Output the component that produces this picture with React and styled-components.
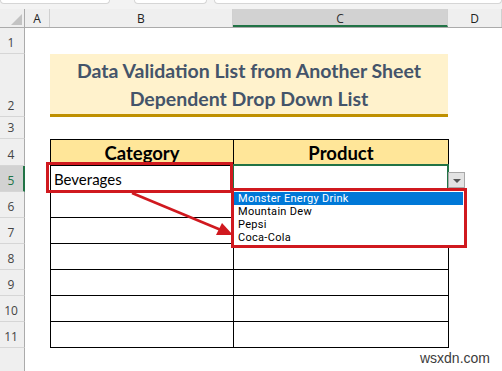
import React from "react";
import styled, { createGlobalStyle } from "styled-components";

const Global = createGlobalStyle`
  html, body { margin: 0; padding: 0; background: #ffffff; }
  body { font-family: "Liberation Sans", Arial, sans-serif; }
`;

const GREEN = "#217346";
const RED = "#d0191f";

const Sheet = styled.div`
  position: relative;
  width: 502px;
  height: 371px;
  overflow: hidden;
  background: #ffffff;
  display: flex;
  flex-direction: column;
`;

const TopStrip = styled.div`
  height: 9px;
  flex: none;
  background: #f3f3f3;
  display: flex;
  align-items: flex-start;
`;

const StripBox = styled.div`
  height: 3px;
  width: ${(p) => p.$w}px;
  margin-left: ${(p) => p.$ml || 0}px;
  background: #ffffff;
  border: 1px solid #d6d6d6;
  border-top: none;
  border-radius: 0 0 4px 4px;
  ${(p) => (p.$grow ? "flex: 1;" : "")}
`;

const HeaderRow = styled.div`
  height: 19px;
  flex: none;
  display: flex;
  background: #efefef;
  border-bottom: 1px solid #ababab;
  box-sizing: border-box;
`;

const Corner = styled.div`
  width: 25px;
  flex: none;
  position: relative;
  border-right: 1px solid #ababab;
  box-sizing: border-box;
  &::after {
    content: "";
    position: absolute;
    right: 2px;
    bottom: 2px;
    width: 0;
    height: 0;
    border-left: 11px solid transparent;
    border-bottom: 11px solid #c3c3c3;
  }
`;

const ColHead = styled.div`
  width: ${(p) => (p.$w ? `${p.$w}px` : "auto")};
  flex: ${(p) => (p.$w ? "none" : "1")};
  box-sizing: border-box;
  display: flex;
  align-items: center;
  justify-content: center;
  font-family: "Open Sans", "Liberation Sans", sans-serif;
  font-size: 12px;
  color: ${(p) => (p.$sel ? "#2f2f2f" : "#222")};
  background: ${(p) => (p.$sel ? "#d2d2d2" : "transparent")};
  border-right: 1px solid #d0d0d0;
  border-bottom: ${(p) => (p.$sel ? `2px solid ${GREEN}` : "none")};
  padding-top: ${(p) => (p.$sel ? "2px" : "0")};
`;

const Row = styled.div`
  height: ${(p) => p.$h}px;
  flex: none;
  display: flex;
`;

const RowHead = styled.div`
  width: 25px;
  flex: none;
  box-sizing: border-box;
  display: flex;
  align-items: flex-end;
  justify-content: center;
  padding-bottom: 2px;
  padding-right: ${(p) => (p.$sel ? "1px" : "2px")};
  font-family: "Open Sans", "Liberation Sans", sans-serif;
  font-size: 12px;
  line-height: 16px;
  color: ${(p) => (p.$sel ? GREEN : "#444")};
  background: ${(p) => (p.$sel ? "#d2d2d2" : "#efefef")};
  border-right: ${(p) => (p.$sel ? `2px solid ${GREEN}` : "1px solid #ababab")};
  border-bottom: 1px solid #d6d6d6;
`;

const Blank = styled.div`
  width: ${(p) => (p.$w ? `${p.$w}px` : "auto")};
  flex: ${(p) => (p.$w ? "none" : "1")};
`;

const TitleCell = styled.div`
  width: 398px;
  flex: none;
  box-sizing: border-box;
  background: #fff2cc;
  border-bottom: 3px solid #bf9000;
  display: flex;
  flex-direction: column;
  align-items: center;
  justify-content: center;
  padding-top: 2px;
  font-family: Lato, "Liberation Sans", sans-serif;
  font-weight: 700;
  font-size: 19.5px;
  line-height: 28px;
  color: #44546a;
  text-align: center;
`;

const Cell = styled.div`
  width: ${(p) => p.$w}px;
  flex: none;
  box-sizing: border-box;
  border-left: 1px solid #000;
  border-bottom: 1px solid #000;
  border-top: ${(p) => (p.$top ? "1px solid #000" : "none")};
  border-right: ${(p) => (p.$last ? "1px solid #000" : "none")};
  background: ${(p) => (p.$head ? "#ffe699" : "#ffffff")};
  display: flex;
  align-items: center;
  justify-content: ${(p) => (p.$head ? "center" : "flex-start")};
  padding-left: ${(p) => (p.$head ? "0" : "3px")};
  padding-top: 1px;
  font-family: Lato, "Liberation Sans", sans-serif;
  font-weight: ${(p) => (p.$head ? 700 : 400)};
  font-size: ${(p) => (p.$head ? "18.5px" : "15px")};
  color: #000;
`;

const Overlay = styled.div`
  position: absolute;
  left: ${(p) => p.$x}px;
  top: ${(p) => p.$y}px;
  width: ${(p) => p.$w}px;
  height: ${(p) => p.$h}px;
  box-sizing: border-box;
`;

const Selection = styled(Overlay)`
  border-top: 2px solid ${GREEN};
  border-right: 2px solid ${GREEN};
  border-left: 2px solid ${GREEN};
`;

const RedBox = styled(Overlay)`
  border: 3px solid ${RED};
`;

const DropButton = styled(Overlay)`
  background: #e3e3e3;
  border: 1px solid #a8a8a8;
  display: flex;
  align-items: center;
  justify-content: center;
  &::after {
    content: "";
    width: 0;
    height: 0;
    border-left: 4px solid transparent;
    border-right: 4px solid transparent;
    border-top: 4px solid #555;
    margin-top: 1px;
  }
`;

const ListBox = styled(Overlay)`
  background: #ffffff;
  border: 1px solid #7a7a7a;
  padding: 1px 1px;
  display: flex;
  flex-direction: column;
`;

const ListItem = styled.div`
  height: 13px;
  line-height: 13px;
  padding-left: 4px;
  overflow: hidden;
  font-family: Roboto, "Liberation Sans", Arial, sans-serif;
  font-size: 11px;
  letter-spacing: 0.3px;
  white-space: nowrap;
  color: ${(p) => (p.$active ? "#ffffff" : "#000000")};
  background: ${(p) => (p.$active ? "#0078d7" : "transparent")};
`;

const ArrowSvg = styled.svg`
  position: absolute;
  left: 0;
  top: 0;
  pointer-events: none;
`;

const Watermark = styled.div`
  position: absolute;
  right: 12px;
  bottom: 5px;
  font-family: "Liberation Sans", Arial, sans-serif;
  font-size: 14px;
  color: #3c3c3c;
`;

const rows = [6, 7, 8, 9, 10, 11];
const products = ["Monster Energy Drink", "Mountain Dew", "Pepsi", "Coca-Cola"];

export default function App() {
  return (
    <>
      <Global />
      <Sheet>
        <TopStrip>
          <StripBox $w={108} />
          <StripBox $w={71} $ml={24} />
          <StripBox $ml={7} $grow />
        </TopStrip>
        <HeaderRow>
          <Corner />
          <ColHead $w={25}>A</ColHead>
          <ColHead $w={183}>B</ColHead>
          <ColHead $w={215} $sel>C</ColHead>
          <ColHead>D</ColHead>
        </HeaderRow>

        <Row $h={26}>
          <RowHead>1</RowHead>
          <Blank />
        </Row>
        <Row $h={63}>
          <RowHead>2</RowHead>
          <Blank $w={25} />
          <TitleCell>
            <span>Data Validation List from Another Sheet</span>
            <span>Dependent Drop Down List</span>
          </TitleCell>
          <Blank />
        </Row>
        <Row $h={22}>
          <RowHead>3</RowHead>
          <Blank />
        </Row>
        <Row $h={27}>
          <RowHead>4</RowHead>
          <Blank $w={25} />
          <Cell $w={183} $head $top>Category</Cell>
          <Cell $w={216} $head $top $last>Product</Cell>
          <Blank />
        </Row>
        <Row $h={26}>
          <RowHead $sel>5</RowHead>
          <Blank $w={25} />
          <Cell $w={183}>Beverages</Cell>
          <Cell $w={216} $last />
          <Blank />
        </Row>
        {rows.map((n) => (
          <Row $h={26} key={n}>
            <RowHead>{n}</RowHead>
            <Blank $w={25} />
            <Cell $w={183} />
            <Cell $w={216} $last />
            <Blank />
          </Row>
        ))}
        <Row $h={30}>
          <RowHead />
          <Blank />
        </Row>

        <Selection $x={232} $y={164} $w={217} $h={28} />
        <DropButton $x={448} $y={172} $w={17} $h={16} />
        <ListBox $x={232} $y={190} $w={233} $h={56}>
          {products.map((p, i) => (
            <ListItem key={p} $active={i === 0}>
              {p}
            </ListItem>
          ))}
        </ListBox>
        <RedBox $x={231} $y={188} $w={236} $h={60} />
        <RedBox $x={46} $y={162} $w={187} $h={31} />

        <ArrowSvg width="502" height="371" viewBox="0 0 502 371">
          <line x1="132" y1="193" x2="221" y2="230" stroke={RED} strokeWidth="2.6" />
          <polygon points="233,235 216,235 222,223" fill={RED} />
        </ArrowSvg>

        <Watermark>wsxdn.com</Watermark>
      </Sheet>
    </>
  );
}
